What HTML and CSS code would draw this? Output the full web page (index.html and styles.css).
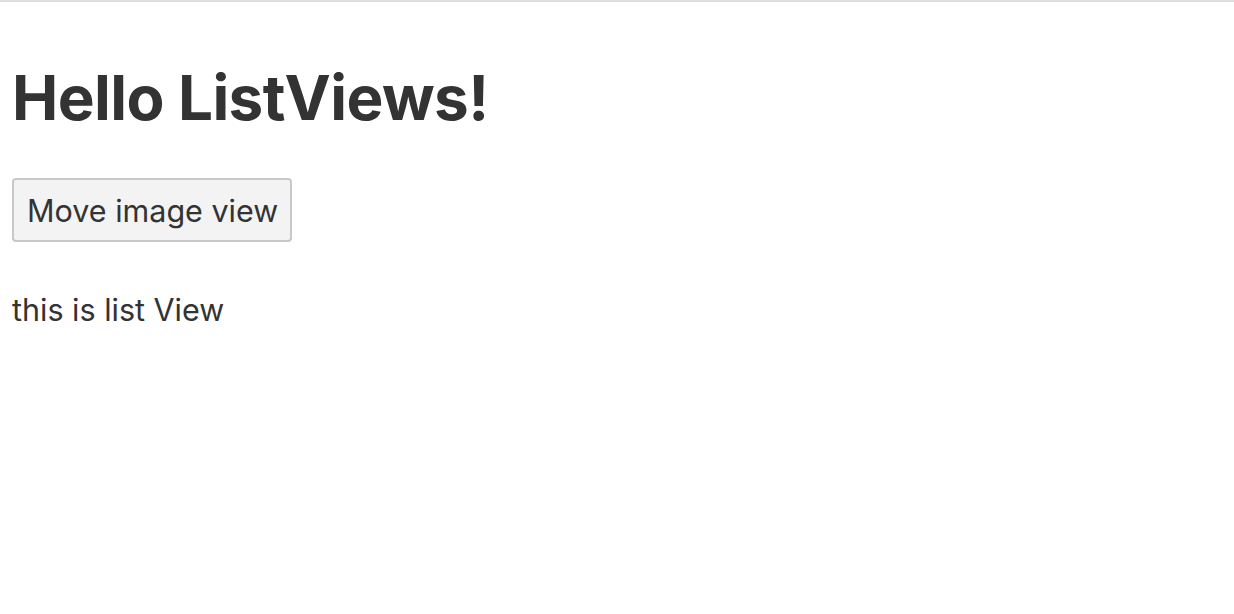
FILE: index.html
```html
<!DOCTYPE html>
<html>
<head>
<meta charset="utf-8">
<link rel="stylesheet" href="styles.css">
</head>
<body>
<div class="page">
  <h1 class="title">Hello ListViews!</h1>
  <button class="btn">Move image view</button>
  <p class="text">this is list View</p>
</div>
</body>
</html>
```
FILE: styles.css
```css
html, body {
  margin: 0;
  padding: 0;
  background: #fff;
}
body {
  border-top: 2px solid #dedede;
  font-family: Inter, "Liberation Sans", sans-serif;
  color: #333;
}
.page {
  padding: 0 12px;
  display: flex;
  flex-direction: column;
  align-items: flex-start;
}
.title {
  margin: 58px 0 0 0;
  font-size: 62px;
  font-weight: 700;
  line-height: 76px;
  letter-spacing: -0.6px;
}
.btn {
  margin-top: 42px;
  height: 64px;
  padding: 0 12px 0 13px;
  font-family: Inter, "Liberation Sans", sans-serif;
  font-size: 30.5px;
  color: #333;
  background: #f3f3f3;
  border: 2px solid #c8c8c8;
  border-radius: 4px;
}
.text {
  margin: 50px 0 0 0;
  font-size: 30.5px;
  line-height: 36px;
}
```
